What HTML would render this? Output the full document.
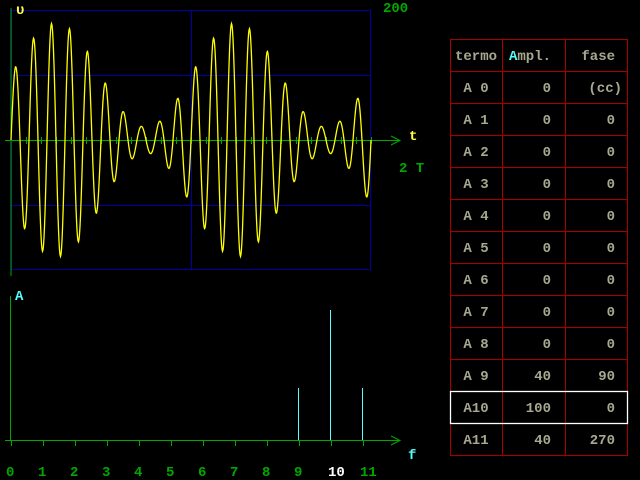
<!DOCTYPE html>
<html><head><meta charset="utf-8"><style>
html,body{margin:0;padding:0;background:#000;width:640px;height:480px;overflow:hidden}
svg{position:absolute;left:0;top:0}
text{font-family:"Liberation Mono","DejaVu Sans Mono",monospace;font-size:14px;font-weight:bold}
</style></head><body>
<svg width="640" height="480" xmlns="http://www.w3.org/2000/svg">
<rect width="640" height="480" fill="#000"/>
<rect x="11.5" y="10.5" width="359" height="259" fill="none" stroke="#0000a8" stroke-width="1"/>
<line x1="191.5" y1="10" x2="191.5" y2="270" stroke="#0000a8"/>
<line x1="11" y1="75.5" x2="371" y2="75.5" stroke="#0000a8"/>
<line x1="11" y1="205.5" x2="371" y2="205.5" stroke="#0000a8"/>
<g stroke="#00a800" fill="none">
<line x1="11" y1="8" x2="11" y2="276"/>
<line x1="5" y1="140.5" x2="400" y2="140.5"/>
<path d="M391 136 L400 140.5 L391 145"/>
<g id="ticks"></g>
</g>
<polyline id="wave" fill="none" stroke="#ffff00" stroke-width="1.3"/>
<text x="16" y="14" fill="#ffff40">υ</text>
<text x="383" y="12" fill="#00a800">200</text>
<text x="409" y="140" fill="#ffff40">t</text>
<text x="399" y="172" fill="#00a800">2 T</text>

<g stroke="#00a800" fill="none">
<line x1="10.5" y1="296" x2="10.5" y2="440"/>
<line x1="5" y1="440.5" x2="400" y2="440.5"/>
<path d="M391 436 L400 440.5 L391 445"/>
<g id="sticks"></g>
</g>
<g stroke="#55ffff" stroke-width="1">
<line x1="298.5" y1="388" x2="298.5" y2="440"/>
<line x1="330.5" y1="310" x2="330.5" y2="440"/>
<line x1="362.5" y1="388" x2="362.5" y2="440"/>
</g>
<text x="15" y="300" fill="#55ffff">A</text>
<text x="408" y="459" fill="#55ffff">f</text>
<g fill="#00a800" font-size="14">
<text x="6" y="476">0</text><text x="38" y="476">1</text><text x="70" y="476">2</text>
<text x="102" y="476">3</text><text x="134" y="476">4</text><text x="166" y="476">5</text>
<text x="198" y="476">6</text><text x="230" y="476">7</text><text x="262" y="476">8</text>
<text x="294" y="476">9</text><text x="328" y="476" fill="#fff">10</text><text x="360" y="476">11</text>
</g>
<g id="tbl"></g>
</svg>
<script>
var pts=[];for(var x=11;x<=371;x+=0.5){var t=(x-11)/180*2*Math.PI;var v=40*Math.cos(9*t)+100*Math.sin(10*t)-40*Math.cos(11*t);pts.push(x+","+(140-v*0.65).toFixed(1));}
document.getElementById('wave').setAttribute('points',pts.join(' '));
var ns="http://www.w3.org/2000/svg";
function el(p,n,a,txt){var e=document.createElementNS(ns,n);for(var k in a)e.setAttribute(k,a[k]);if(txt!=null)e.textContent=txt;p.appendChild(e);return e;}
var tk=document.getElementById('ticks');for(var i=1;i<=24;i++){var x=11+i*15+0.5;el(tk,'line',{x1:x,y1:137,x2:x,y2:144});}
var st=document.getElementById('sticks');for(var i=0;i<=11;i++){var x=11+i*32+0.5;el(st,'line',{x1:x,y1:440,x2:x,y2:446});}
var tb=document.getElementById('tbl');
for(var r=1;r<13;r++){el(tb,'line',{x1:450,y1:39.5+r*32,x2:628,y2:39.5+r*32,stroke:'#a80000'});}
el(tb,'rect',{x:450.5,y:39.5,width:177,height:416,fill:'none',stroke:'#a80000'});
el(tb,'line',{x1:502.5,y1:39,x2:502.5,y2:456,stroke:'#a80000'});
el(tb,'line',{x1:565.5,y1:39,x2:565.5,y2:456,stroke:'#a80000'});
var c='#a8a890';
el(tb,'text',{x:476,y:60,fill:c,'text-anchor':'middle'},'termo');
var a=el(tb,'text',{x:551,y:60,fill:c,'text-anchor':'end'});
el(a,'tspan',{fill:'#55ffff'},'A');el(a,'tspan',{},'mpl.');
el(tb,'text',{x:615,y:60,fill:c,'text-anchor':'end'},'fase');
var amp=[0,0,0,0,0,0,0,0,0,40,100,40],fa=['(cc)','0','0','0','0','0','0','0','0','90','0','270'];
for(var r=0;r<12;r++){var y=39+32*(r+1)+21;
var lab=r<10?'A '+r:'A'+r;
el(tb,'text',{x:476,y:y,fill:c,'text-anchor':'middle'},lab);
el(tb,'text',{x:551,y:y,fill:c,'text-anchor':'end'},String(amp[r]));
el(tb,'text',{x:r==0?622:615,y:y,fill:c,'text-anchor':'end'},fa[r]);}
el(tb,'rect',{x:450.5,y:391.5,width:177,height:32,fill:'none',stroke:'#fff','stroke-width':1.3});
</script>
</body></html>
